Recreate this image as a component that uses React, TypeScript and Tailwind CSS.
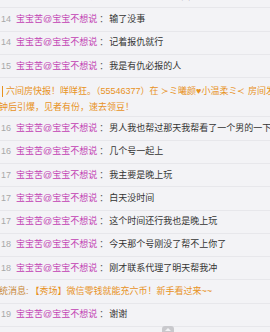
const rows1 = [
    { n: "14", msg: "搞定了我帮你们打回去了" },
    { n: "14", msg: "输了没事" },
    { n: "14", msg: "记着报仇就行" },
    { n: "15", msg: "我是有仇必报的人" },
]

const rows2 = [
    { n: "16", msg: "男人我也帮过那天我帮看了一个男的一下午" },
    { n: "16", msg: "几个号一起上" },
    { n: "17", msg: "我主要是晚上玩" },
    { n: "17", msg: "白天没时间" },
    { n: "17", msg: "这个时间还行我也是晚上玩" },
    { n: "18", msg: "今天那个号刚没了帮不上你了" },
    { n: "18", msg: "刚才联系代理了明天帮我冲" },
]

function ChatRow({ n, msg }: { n: string; msg: string }) {
    return (
        <div className="h-[23.3px] shrink-0 flex items-center whitespace-nowrap border-b border-[#e7e7eb]">
            <span className="w-[16px] shrink-0 pl-[1px] text-[#a8a8a8]">{n}</span>
            <span className="shrink-0 text-[#c23fb3]">宝宝苦@宝宝不想说</span>
            <span className="shrink-0 ml-[2px] text-[#555]">：</span>
            <span className="shrink-0 ml-[1px] text-[#333]">{msg}</span>
        </div>
    )
}

export default function App() {
    return (
        <div
            className="relative w-[270px] h-[332px] overflow-hidden bg-[#f3f3f6] text-[9px] leading-none"
            style={{ fontFamily: '"Liberation Sans", "Noto Sans CJK SC", sans-serif' }}
        >
            <div className="flex flex-col mt-[-14.95px]">
                {rows1.map((r, i) => (
                    <ChatRow key={"a" + i} n={r.n} msg={r.msg} />
                ))}
                <div className="h-[39.1px] shrink-0 flex flex-col pt-[5px] border-b border-[#e7e7eb] text-[#e8921e] whitespace-nowrap">
                    <div className="h-[16px] flex items-center">
                        <span className="shrink-0 ml-[2px] w-[1px] h-[11px] bg-[#e8921e]" />
                        <span className="shrink-0 ml-[3px]">六间房快报！咩咩狂。（55546377）在 ≻ミ曦颜♥小温柔ミ≺ 房间发了一个豆包</span>
                    </div>
                    <div className="h-[16px] flex items-center ml-[-1px]">钟后引爆，见者有份，速去领豆！</div>
                </div>
                {rows2.map((r, i) => (
                    <ChatRow key={"b" + i} n={r.n} msg={r.msg} />
                ))}
                <div className="h-[23.3px] shrink-0 flex items-center whitespace-nowrap border-b border-[#e7e7eb]">
                    <span className="shrink-0 ml-[-10px] text-[#c98a3c]">系统消息:</span>
                    <span className="shrink-0 ml-[2px] text-[#e8921e]">【秀场】</span>
                    <span className="shrink-0 text-[#e8921e]">微信零钱就能充六币！新手看过来~~</span>
                </div>
                <ChatRow n="19" msg="谢谢" />
            </div>
            <div className="absolute left-[162px] bottom-0 w-[12px] h-[6px] rounded-t-[3px] bg-[#c9c9cd] flex items-center justify-center">
                <div className="w-0 h-0 border-l-[3px] border-r-[3px] border-b-[3px] border-l-transparent border-r-transparent border-b-[#f3f3f6]" />
            </div>
        </div>
    )
}
